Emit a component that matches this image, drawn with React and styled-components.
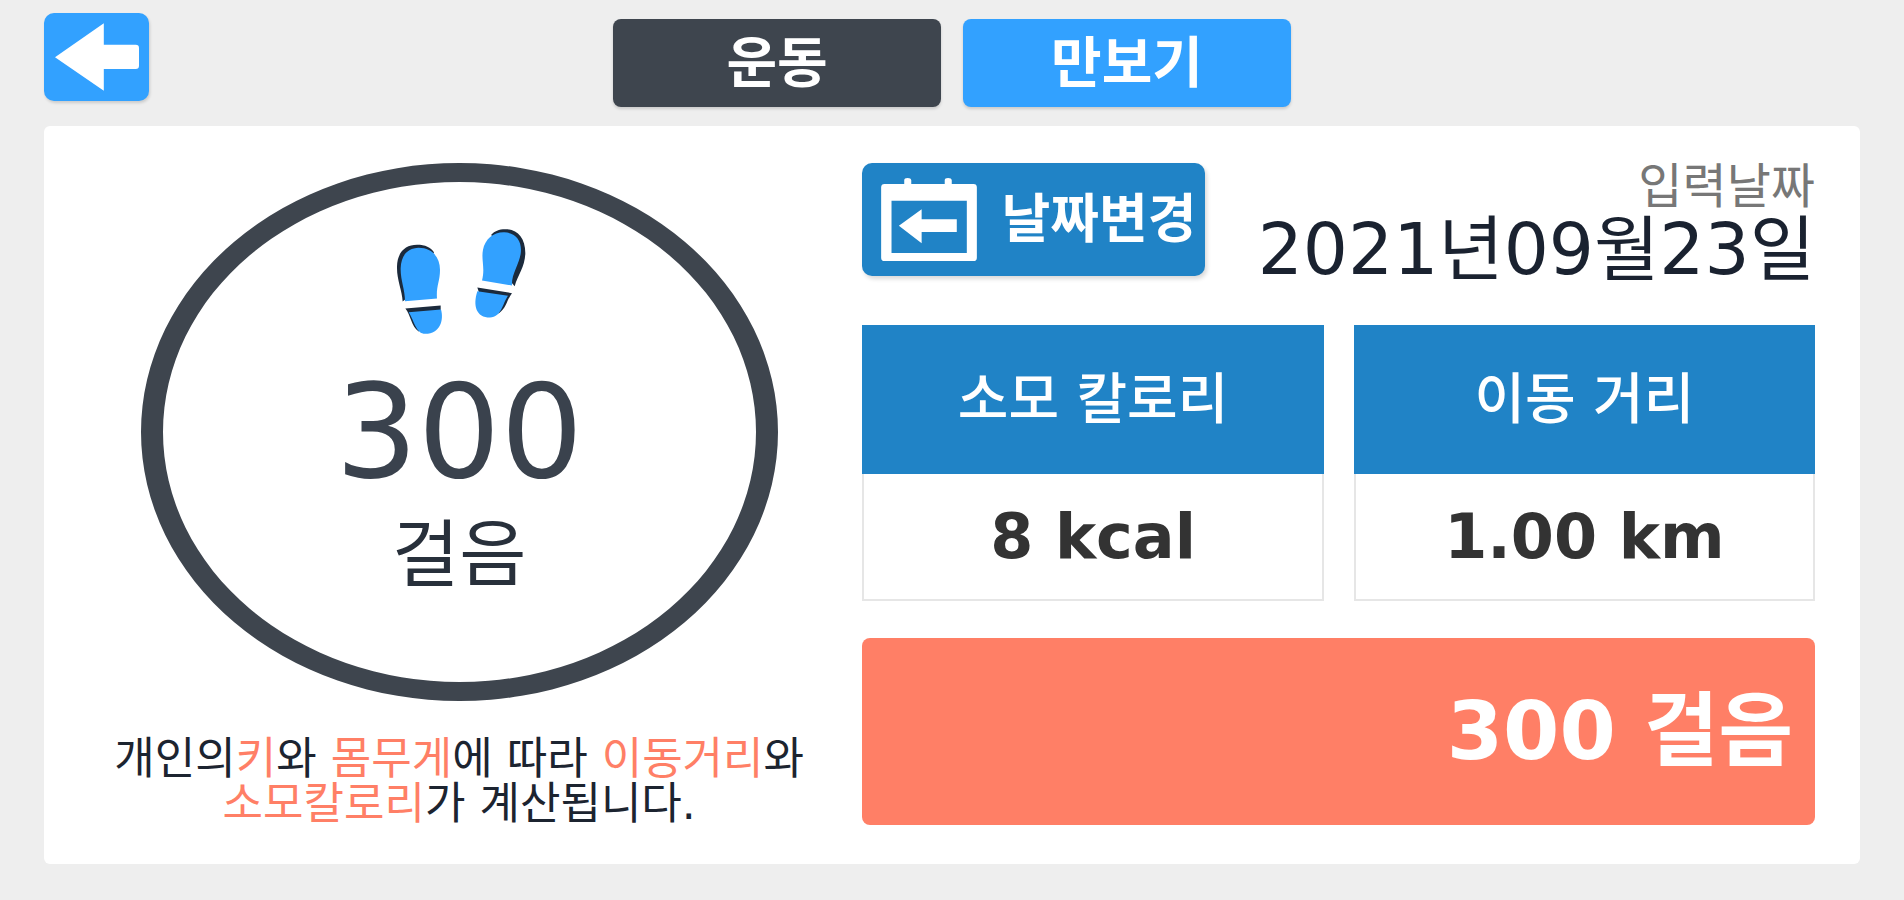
import styled, { createGlobalStyle } from "styled-components";

const GlobalStyle = createGlobalStyle`
  * {
    box-sizing: border-box;
    margin: 0;
    padding: 0;
  }
  body {
    background: #eeeeee;
    color: #1c2430;
    font-family: "DejaVu Sans", "Noto Sans CJK KR", sans-serif;
  }
  button {
    border: 0;
    font-family: inherit;
    cursor: pointer;
  }
`;

const Page = styled.div`
  padding: 13px 44px 36px;
`;

const TopBar = styled.header`
  display: grid;
  grid-template-columns: 1fr auto 1fr;
  align-items: start;
  margin-bottom: 19px;
`;

const BackButton = styled.button`
  display: flex;
  align-items: center;
  justify-content: center;
  width: 105px;
  height: 88px;
  border-radius: 10px;
  background: #32a1ff;
  box-shadow: 1px 2px 3px rgba(0, 0, 0, 0.15);
`;

const Tabs = styled.nav`
  display: flex;
  gap: 22px;
  padding-top: 6px;
`;

const Tab = styled.button`
  width: 328px;
  height: 88px;
  border-radius: 8px;
  background: ${(props) => (props.$active ? "#32a1ff" : "#3e454e")};
  box-shadow: 0 2px 3px rgba(0, 0, 0, 0.15);
  color: #ffffff;
  font-size: 55px;
  font-weight: 700;
  line-height: 88px;
`;

const Card = styled.main`
  display: grid;
  grid-template-columns: 740fr 952fr;
  gap: 33px;
  padding: 37px 45px 38px;
  background: #ffffff;
  border-radius: 6px;
`;

const Summary = styled.section`
  display: flex;
  flex-direction: column;
  align-items: center;
`;

const StepRing = styled.div`
  display: flex;
  flex-direction: column;
  align-items: center;
  width: 86%;
  min-height: 538px;
  padding-top: 46px;
  border: solid #3e454e;
  border-width: 19px 22px;
  border-radius: 50%;
`;

const StepCount = styled.strong`
  margin-top: 35px;
  color: #3a424d;
  font-size: 130px;
  font-weight: 400;
  line-height: 124px;
`;

const StepUnit = styled.span`
  margin-top: 25px;
  color: #28303b;
  font-size: 73px;
  line-height: 72px;
`;

const Note = styled.p`
  margin-top: 35px;
  font-size: 44px;
  line-height: 45px;
  text-align: center;
  white-space: nowrap;
`;

const NoteLine = styled.span`
  display: block;
`;

const Accent = styled.span`
  display: inline-block;
  color: #ff7f66;
`;

const Details = styled.section`
  display: flex;
  flex-direction: column;
`;

const DateRow = styled.div`
  display: flex;
  justify-content: space-between;
  align-items: flex-start;
  margin-bottom: 34px;
`;

const DateButton = styled.button`
  display: flex;
  align-items: center;
  gap: 24px;
  height: 113px;
  padding: 0 9px 0 19px;
  border-radius: 10px;
  background: #2083c6;
  box-shadow: 2px 3px 4px rgba(0, 0, 0, 0.15);
  color: #ffffff;
  font-size: 53px;
  font-weight: 700;
  line-height: 72px;
`;

const DateInfo = styled.div`
  display: flex;
  flex-direction: column;
  align-items: flex-end;
  white-space: nowrap;
`;

const DateLabel = styled.span`
  color: #777777;
  font-size: 48px;
  line-height: 46px;
`;

const DateValue = styled.time`
  color: #1a2230;
  font-size: 71px;
  line-height: 82px;
`;

const Stats = styled.div`
  display: grid;
  grid-template-columns: 1fr 1fr;
  gap: 30px;
  margin-bottom: 37px;
`;

const Stat = styled.article`
  text-align: center;
`;

const StatTitle = styled.h2`
  background: #2083c6;
  color: #ffffff;
  font-size: 55px;
  font-weight: 500;
  line-height: 149px;
`;

const StatValue = styled.p`
  border: 2px solid #e6e6e6;
  border-top: 0;
  color: #333333;
  font-size: 62px;
  font-weight: 700;
  line-height: 125px;
`;

const Total = styled.p`
  padding: 0 22px;
  border-radius: 8px;
  background: #ff7f66;
  color: #ffffff;
  font-size: 81px;
  font-weight: 700;
  line-height: 187px;
  text-align: right;
`;

function BackArrow() {
  return (
    <svg width="84" height="68" viewBox="75 68 253 204" aria-hidden="true">
      <path
        d="M75 171L222 68V133H318Q328 133 328 143V196Q328 206 318 206H222V272Z"
        fill="#ffffff"
      />
    </svg>
  );
}

function CalendarIcon() {
  return (
    <svg width="96" height="83" viewBox="97 85 286 248" aria-hidden="true">
      <path
        d="M107 103H166V92Q166 85 176 85T187 92V103H287V92Q287 85 297 85T308 92V103H373Q383 103 383 113V323Q383 333 373 333H107Q97 333 97 323V113Q97 103 107 103ZM128 153V309H353V153Z"
        fill="#ffffff"
        fillRule="evenodd"
      />
      <path d="M150 228L218 178V208H323V246H218V280Z" fill="#ffffff" />
    </svg>
  );
}

function Footprints() {
  return (
    <svg width="134" height="107" viewBox="70 50 402 320" aria-hidden="true">
      <path
        d="M102 270C100 235 84 205 85 165C86 122 110 100 145 100C170 100 186 108 196 122L140 240Z"
        fill="#1b2a3c"
      />
      <path
        d="M109 269C109 235 95 205 96 170C97 132 117 110 150 109C190 109 214 137 214 175C214 210 202 225 205 261Z"
        fill="#32a1ff"
      />
      <path d="M110 291L216 282V298L150 360C128 345 126 310 110 291Z" fill="#1b2a3c" />
      <path
        d="M120 302L217 294C226 325 215 367 170 367C142 367 138 330 120 302Z"
        fill="#32a1ff"
      />
      <path
        d="M438 224C448 190 469 165 470 125C470 78 445 53 410 53C390 53 378 59 368 69L400 180Z"
        fill="#1b2a3c"
      />
      <path
        d="M340 207C350 170 337 145 343 115C349 82 375 61 407 62C445 64 461 92 456 127C451 160 428 188 430 222Z"
        fill="#32a1ff"
      />
      <path d="M326 228L430 245C414 265 414 290 390 306L340 270Z" fill="#1b2a3c" />
      <path
        d="M326 239L418 253C402 276 398 318 364 318C323 318 312 283 326 239Z"
        fill="#32a1ff"
      />
    </svg>
  );
}

const stats = [
  { title: "소모 칼로리", value: "8 kcal" },
  { title: "이동 거리", value: "1.00 km" },
];

function App() {
  return (
    <>
      <GlobalStyle />
      <Page>
        <TopBar>
          <BackButton type="button" aria-label="뒤로">
            <BackArrow />
          </BackButton>
          <Tabs>
            <Tab type="button">운동</Tab>
            <Tab type="button" $active>
              만보기
            </Tab>
          </Tabs>
        </TopBar>
        <Card>
          <Summary>
            <StepRing>
              <Footprints />
              <StepCount>300</StepCount>
              <StepUnit>걸음</StepUnit>
            </StepRing>
            <Note>
              <NoteLine>
                개인의<Accent>키</Accent>와 <Accent>몸무게</Accent>에 따라{" "}
                <Accent>이동거리</Accent>와
              </NoteLine>
              <NoteLine>
                <Accent>소모칼로리</Accent>가 계산됩니다.
              </NoteLine>
            </Note>
          </Summary>
          <Details>
            <DateRow>
              <DateButton type="button">
                <CalendarIcon />
                날짜변경
              </DateButton>
              <DateInfo>
                <DateLabel>입력날짜</DateLabel>
                <DateValue dateTime="2021-09-23">2021년09월23일</DateValue>
              </DateInfo>
            </DateRow>
            <Stats>
              {stats.map((stat) => (
                <Stat key={stat.title}>
                  <StatTitle>{stat.title}</StatTitle>
                  <StatValue>{stat.value}</StatValue>
                </Stat>
              ))}
            </Stats>
            <Total>300 걸음</Total>
          </Details>
        </Card>
      </Page>
    </>
  );
}

export default App;
